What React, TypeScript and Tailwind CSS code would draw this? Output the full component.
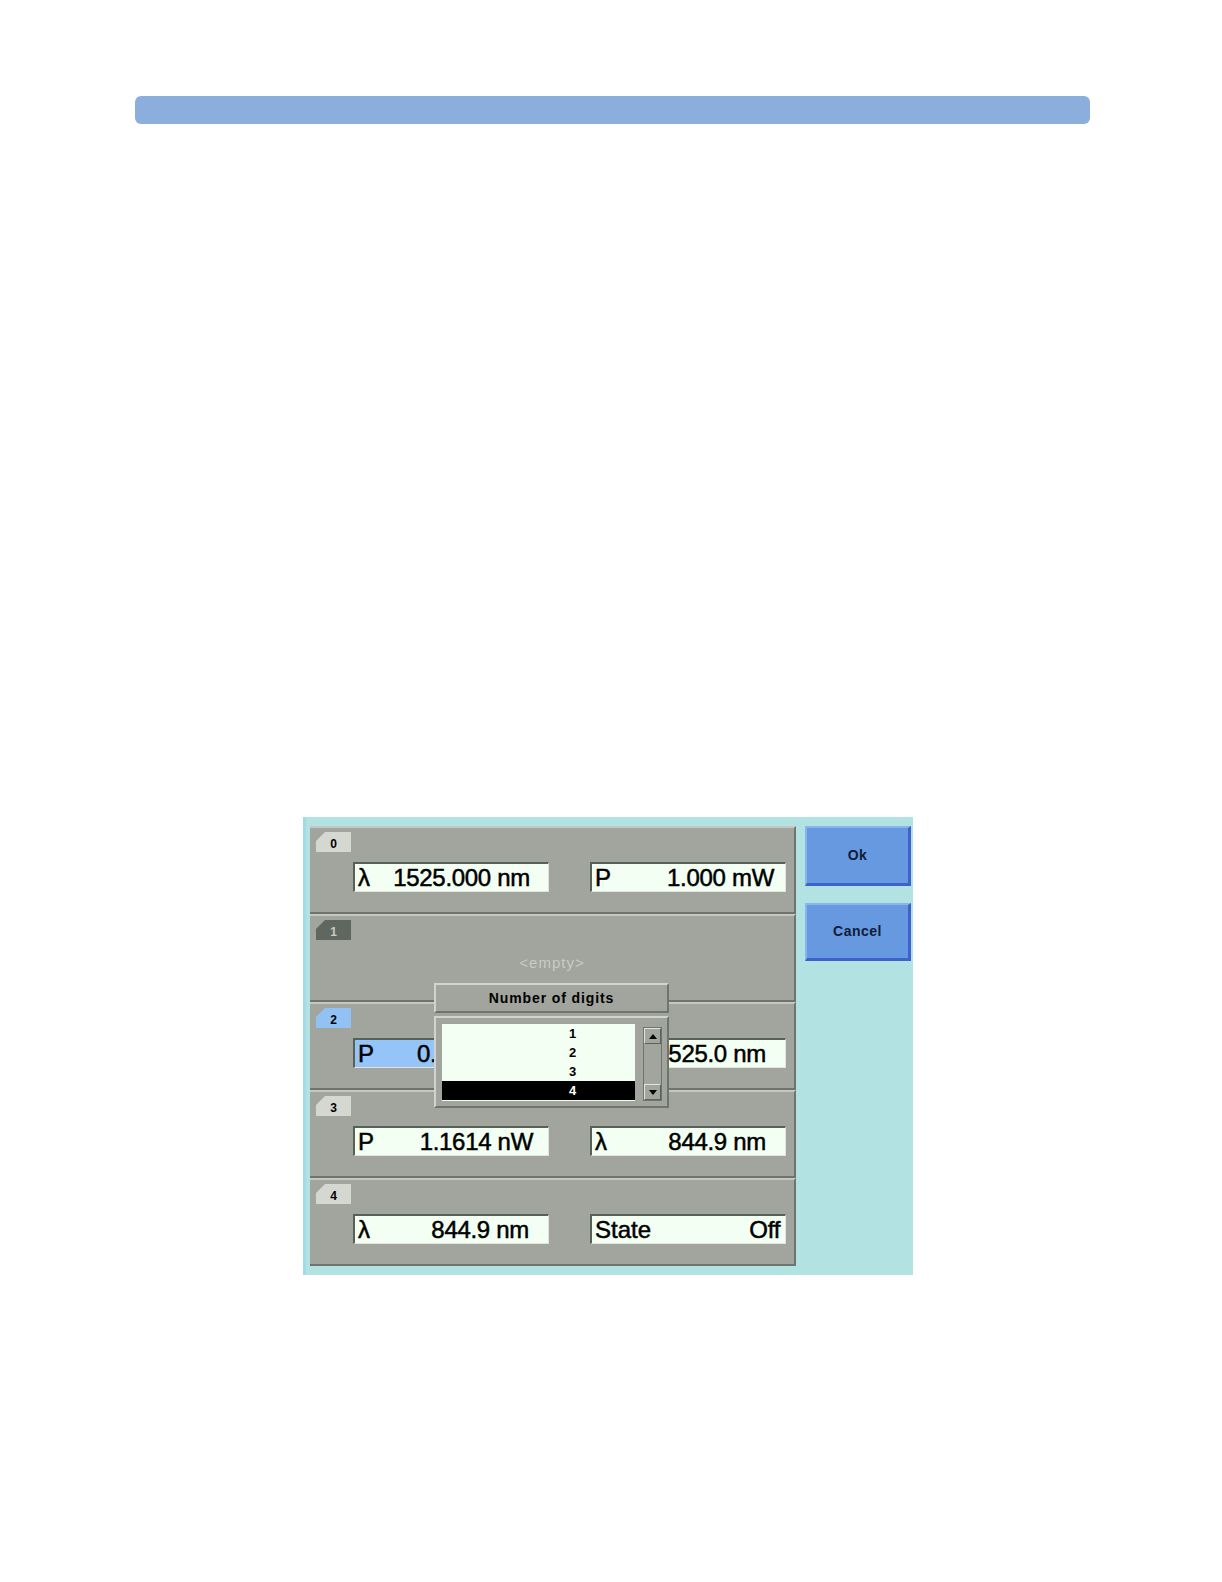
import React from 'react'

type Field = { label: string; value: string; pr: string; active?: boolean }
type Row = { id: string; tab: 'light' | 'dark' | 'blue'; fields?: [Field, Field] }

const rows: Row[] = [
  {
    id: '0',
    tab: 'light',
    fields: [
      { label: 'λ', value: '1525.000 nm', pr: 'pr-[18px]' },
      { label: 'P', value: '1.000 mW', pr: 'pr-[11px]' },
    ],
  },
  { id: '1', tab: 'dark' },
  {
    id: '2',
    tab: 'blue',
    fields: [
      { label: 'P', value: '0.9998 mW', pr: 'pr-[11px]', active: true },
      { label: 'λ', value: '1525.0 nm', pr: 'pr-[19px]' },
    ],
  },
  {
    id: '3',
    tab: 'light',
    fields: [
      { label: 'P', value: '1.1614 nW', pr: 'pr-[15px]' },
      { label: 'λ', value: '844.9 nm', pr: 'pr-[19px]' },
    ],
  },
  {
    id: '4',
    tab: 'light',
    fields: [
      { label: 'λ', value: '844.9 nm', pr: 'pr-[19px]' },
      { label: 'State', value: 'Off', pr: 'pr-[5px]' },
    ],
  },
]

const tabStyles = {
  light: 'bg-[#d4d8d0] text-black',
  dark: 'bg-[#5f675e] text-[#c8ccc4]',
  blue: 'bg-[#92c2f4] text-black',
}

function Tab({ id, kind }: { id: string; kind: Row['tab'] }) {
  return (
    <div
      className={`w-[35px] h-[20px] flex items-center justify-center pt-[4px] text-[12px] font-bold ${tabStyles[kind]}`}
      style={{ clipPath: 'polygon(9px 0, 100% 0, 100% 100%, 0 100%, 0 9px)' }}
    >
      {id}
    </div>
  )
}

function ValueField({ f }: { f: Field }) {
  return (
    <div
      className={`w-[196px] h-[30px] flex items-center justify-between pl-[3px] ${f.pr} border-t-2 border-l-2 border-t-[#58605a] border-l-[#58605a] border-b border-r border-b-[#e0e4dc] border-r-[#e0e4dc] ${
        f.active ? 'bg-[#94c4f8]' : 'bg-[#f2fff2]'
      } text-[24px] leading-none text-black [-webkit-text-stroke:0.5px_black]`}
    >
      <span>{f.label}</span>
      <span className="tracking-[-0.3px]">{f.value}</span>
    </div>
  )
}

function RowPanel({ row }: { row: Row }) {
  return (
    <div className="h-[88px] bg-[#a1a59d] border-t-2 border-t-[#c4c8c0] border-b-2 border-b-[#6e756d] border-r-2 border-r-[#6e756d] pl-[6px] pt-[4px]">
      <Tab id={row.id} kind={row.tab} />
      {row.fields ? (
        <div className="flex gap-[41px] pl-[37px] pt-[10px]">
          <ValueField f={row.fields[0]} />
          <ValueField f={row.fields[1]} />
        </div>
      ) : (
        <div className="text-center text-[15px] tracking-[1px] text-[#c8ccc4] pt-[12px] pr-[6px]">&lt;empty&gt;</div>
      )}
    </div>
  )
}

function DigitsPopup() {
  const items = ['1', '2', '3', '4']
  return (
    <div className="absolute left-[124px] top-[157px] w-[235px] bg-[#a1a59d] font-bold">
      <div className="h-[30px] flex items-center justify-center text-[14px] tracking-[0.9px] text-black border-t-2 border-l-2 border-t-[#d0d4cc] border-l-[#d0d4cc] border-b-2 border-r-2 border-b-[#6e756d] border-r-[#6e756d]">
        Number of digits
      </div>
      <div className="mt-[3px] h-[92px] border-t-2 border-l-2 border-t-[#d0d4cc] border-l-[#d0d4cc] border-b-2 border-r-2 border-b-[#6e756d] border-r-[#6e756d] flex pl-[6px] pt-[6px] gap-[8px]">
        <div className="w-[193px] h-[77px] bg-[#f2fff2] flex flex-col">
          {items.map((it) => (
            <div
              key={it}
              className={`h-[19px] flex items-center pl-[127px] text-[13px] ${
                it === '4' ? 'bg-black text-white' : 'text-black'
              }`}
            >
              {it}
            </div>
          ))}
        </div>
        <div className="w-[19px] h-[74px] mt-[3px] border border-[#6e756d] bg-[#a1a59d] flex flex-col justify-between">
          <div className="h-[16px] border-t border-l border-t-[#e0e4dc] border-l-[#e0e4dc] border-b border-r border-b-[#5a625a] border-r-[#5a625a] flex items-center justify-center">
            <svg width="8" height="5" viewBox="0 0 8 5">
              <path d="M4 0 L8 5 L0 5 Z" fill="#000" />
            </svg>
          </div>
          <div className="h-[16px] border-t border-l border-t-[#e0e4dc] border-l-[#e0e4dc] border-b border-r border-b-[#5a625a] border-r-[#5a625a] flex items-center justify-center">
            <svg width="8" height="5" viewBox="0 0 8 5">
              <path d="M0 0 L8 0 L4 5 Z" fill="#000" />
            </svg>
          </div>
        </div>
      </div>
    </div>
  )
}

function SideButton({ label, h }: { label: string; h: string }) {
  return (
    <button
      className={`w-[106px] ${h} bg-[#6699df] border-t-2 border-l-2 border-t-[#8cb4ec] border-l-[#8cb4ec] border-b-[3px] border-r-[3px] border-b-[#3d62cc] border-r-[#3d62cc] text-[14px] font-bold text-[#0e1c3a] tracking-[0.5px] flex items-center justify-center`}
    >
      {label}
    </button>
  )
}

export default function App() {
  return (
    <div className="w-full min-h-screen bg-white font-['Liberation_Sans',Arial,sans-serif] pt-[96px] pb-[300px]">
      <div className="ml-[135px] w-[955px] h-[28px] rounded-[6px] bg-[#8caedd]" />

      <div className="ml-[303px] mt-[693px] w-[610px] h-[458px] bg-[#b2e3e2] border-l-[3px] border-l-[#a4dae6] pl-[4px] pt-[9px] flex gap-[9px]">
        <div className="relative w-[486px] flex flex-col">
          {rows.map((r) => (
            <RowPanel key={r.id} row={r} />
          ))}
          <DigitsPopup />
        </div>
        <div className="flex flex-col gap-[17px]">
          <SideButton label="Ok" h="h-[60px]" />
          <SideButton label="Cancel" h="h-[58px]" />
        </div>
      </div>
    </div>
  )
}
